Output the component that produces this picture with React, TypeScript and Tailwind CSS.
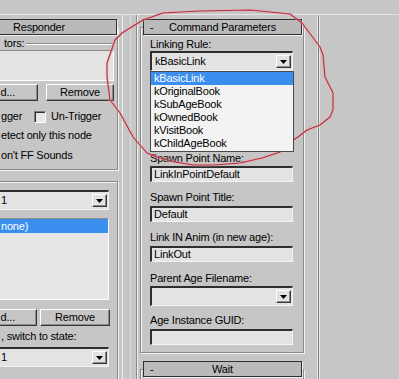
import React from 'react';

const raised =
  'border border-t-white border-l-white border-r-[#383838] border-b-[#383838] shadow-[inset_-1px_-1px_0_#8c8c8c] bg-[#c6c6c6]';
const sunken =
  'border-t-2 border-l-2 border-t-[#2e2e2e] border-l-[#2e2e2e] border-r border-b border-r-[#f4f4f4] border-b-[#f4f4f4] bg-[#e3e3e3]';
const etched = 'border border-[#8a8a8a] shadow-[inset_1px_1px_0_#f2f2f2,1px_1px_0_#f2f2f2]';

function TitleBar({ label, minus, className = '' }: { label: string; minus?: boolean; className?: string }) {
  return (
    <div
      className={`relative -mt-[9px] h-[16px] bg-[#bababa] border border-[#2e2e2e] shadow-[1px_1px_0_#f0f0f0] flex items-center justify-center leading-[14px] ${className}`}
    >
      {minus && <span className="absolute left-[6px] top-0">-</span>}
      <span>{label}</span>
    </div>
  );
}

function Arrow() {
  return (
    <div className={`w-[15px] h-[13px] shrink-0 flex items-center justify-center ${raised} bg-[#e2e2e2]`}>
      <svg width="7" height="4" viewBox="0 0 7 4">
        <path d="M0 0 H7 L3.5 4 Z" fill="#000" />
      </svg>
    </div>
  );
}

function Dropdown({ text, className = '' }: { text?: string; className?: string }) {
  return (
    <div className={`h-[20px] flex items-center justify-between pl-[2px] pr-[1px] ${sunken} ${className}`}>
      <span className="leading-[13px]">{text}</span>
      <Arrow />
    </div>
  );
}

function Field({ text, className = '' }: { text?: string; className?: string }) {
  return (
    <div className={`h-[16px] pl-[2px] leading-[13px] ${sunken} ${className}`}>{text}</div>
  );
}

function Label({ text, className = '' }: { text: string; className?: string }) {
  return <div className={`h-[13px] leading-[13px] whitespace-nowrap ${className}`}>{text}</div>;
}

function Check() {
  return (
    <div className="w-[12px] h-[12px] shrink-0 border border-t-[#7a7a7a] border-l-[#7a7a7a] border-r-white border-b-white bg-[#e6e6e6] shadow-[inset_1px_1px_0_#2e2e2e]" />
  );
}

const linkRules = ['kBasicLink', 'kOriginalBook', 'kSubAgeBook', 'kOwnedBook', 'kVisitBook', 'kChildAgeBook'];

// left column is scrolled partly out of view, so only the visible tails of its texts show
function LeftColumn() {
  return (
    <div className="w-[120px] shrink-0 overflow-hidden">
      <div className="-ml-[42px] w-[160px]">
        <div className={`mt-[12px] ${etched} pb-[7px]`}>
          <TitleBar label="Responder" className="ml-[2px] mr-[0px]" />
          <div className="mt-[2px] h-[13px] flex items-center ml-[45px] mr-[3px]">
            <span className="leading-[13px]">tors:</span>
            <div className="flex-1 ml-[2px] h-[2px] border-t border-t-[#8a8a8a] border-b border-b-white" />
          </div>
          <div className="h-[31px] ml-[8px] mr-[3px] border border-t-[#8a8a8a] border-l-[#8a8a8a] border-r-white border-b-white bg-[#e3e3e3]" />
          <div className="mt-[3px] flex ml-[8px] gap-[8px]">
            <div className={`w-[71px] h-[17px] flex items-center justify-end pr-[22px] ${raised}`}>d...</div>
            <div className={`w-[68px] h-[17px] flex items-center justify-center ${raised}`}>Remove</div>
          </div>
          <div className="mt-[9px] h-[13px] flex items-center ml-[12px]">
            <div className="w-[63px] flex items-center">
              <Check />
              <span className="ml-[18px]">gger</span>
            </div>
            <div className="flex items-center gap-[5px]">
              <Check />
              <span>Un-Trigger</span>
            </div>
          </div>
          <Label text="etect only this node" className="mt-[6px] ml-[42px]" />
          <Label text="on't FF Sounds" className="mt-[7px] ml-[42px]" />
        </div>

        <div className={`mt-[11px] ${etched} pb-[40px]`}>
          <Dropdown text="1" className="mt-[8px] ml-[8px] mr-[8px] pl-[32px]" />
          <div className="mt-[8px] ml-[8px] mr-[8px] h-[82px] border border-t-[#8a8a8a] border-l-[#8a8a8a] border-r-white border-b-white bg-[#e6e6e6]">
            <div className="h-[14px] bg-[#3a8eee] text-white leading-[14px] pl-[33px]">none)</div>
          </div>
          <div className="mt-[9px] flex ml-[8px] gap-[3px]">
            <div className={`w-[70px] h-[17px] flex items-center justify-end pr-[21px] ${raised}`}>d...</div>
            <div className={`w-[70px] h-[17px] flex items-center justify-center ${raised}`}>Remove</div>
          </div>
          <Label text=", switch to state:" className="mt-[4px] ml-[42px]" />
          <Dropdown text="1" className="mt-[4px] ml-[8px] mr-[8px] pl-[32px]" />
        </div>
      </div>
    </div>
  );
}

function MiddleColumn() {
  return (
    <div className="w-[168px] shrink-0 border-l border-l-[#8a8a8a] pl-[3px] shadow-[inset_1px_0_0_#eeeeee]">
      <div className={`mt-[12px] ${etched} pb-[7px]`}>
        <TitleBar label="Command Parameters" minus className="ml-[2px] mr-[1px]" />
        <div className="pl-[9px]">
          <Label text="Linking Rule:" className="mt-[3px]" />
          <div className="relative w-[143px]">
            <Dropdown text="kBasicLink" className="pl-[3px]" />
            <div className="absolute left-0 top-full w-[144px] h-[81px] border border-[#4a4a4a] bg-[#f3f3f3] z-10">
              {linkRules.map((r, i) => (
                <div
                  key={r}
                  className={`h-[13px] leading-[13px] pl-[3px] ${i === 0 ? 'bg-[#3a8eee] text-white' : ''}`}
                >
                  {r}
                </div>
              ))}
            </div>
          </div>
          <div className="h-[81px]" />
          <Label text="Spawn Point Name:" />
          <Field text="LinkInPointDefault" className="mt-[1px] w-[143px]" />
          <Label text="Spawn Point Title:" className="mt-[9px]" />
          <Field text="Default" className="mt-[2px] w-[143px]" />
          <Label text="Link IN Anim (in new age):" className="mt-[9px]" />
          <Field text="LinkOut" className="mt-[2px] w-[143px]" />
          <Label text="Parent Age Filename:" className="mt-[10px]" />
          <Dropdown className="mt-[1px] w-[143px]" />
          <Label text="Age Instance GUID:" className="mt-[8px]" />
          <Field className="mt-[2px] w-[143px]" />
        </div>
      </div>
      <div className={`mt-[16px] ${etched} pb-[20px]`}>
        <TitleBar label="Wait" minus className="ml-[2px] mr-[1px]" />
      </div>
    </div>
  );
}

function Scribble() {
  const pts =
    '163,13 200,11 250,10 290,14 302,23 311,35 320,47 323,55 325,77 333,93 333,110 330,117 320,125 307,130 298,137 290,142 280,152 262,158 240,163 215,165 193,165 175,162 157,157 147,153 133,137 120,113 110,100 107,77 107,63 115,40 122,33 130,28 143,20 163,13';
  return (
    <svg className="absolute inset-0 pointer-events-none" width="399" height="379" viewBox="0 0 399 379">
      <polyline points={pts} fill="none" stroke="#eaa8b0" strokeWidth="3" strokeOpacity="0.45" strokeLinejoin="round" />
      <polyline points={pts} fill="none" stroke="#b52c3c" strokeWidth="1.1" strokeLinejoin="round" />
    </svg>
  );
}

export default function App() {
  return (
    <div className="relative w-[399px] h-[379px] overflow-hidden bg-[#c6c6c6] text-black text-[11px] tracking-[-0.2px] font-['Liberation_Sans',Arial,sans-serif] flex flex-col">
      <div className="h-[14px] shrink-0" />
      <div className="flex flex-1 border-t border-t-[#e4e4e4]">
        <LeftColumn />
        <div className="w-[16px] shrink-0 flex">
          <div className="w-[3px] border-r border-r-[#eeeeee]" />
          <div className="w-[8px] border-r border-r-[#dadada]" />
        </div>
        <MiddleColumn />
        <div className="w-[15px] shrink-0 border-r border-r-[#7a7a7a] flex justify-end">
          <div className="w-[2px] border-r border-r-[#e8e8e8]" />
        </div>
        <div className="flex-1 border-l border-l-[#eaeaea]" />
      </div>
      <Scribble />
    </div>
  );
}
